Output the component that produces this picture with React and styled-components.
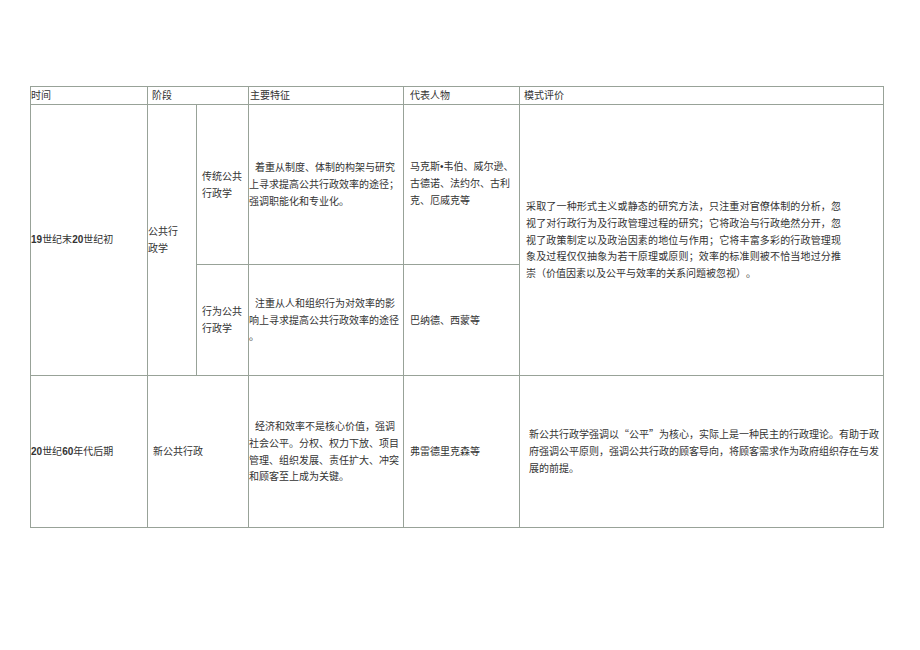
import styled, { createGlobalStyle } from 'styled-components'

const GlobalStyle = createGlobalStyle`
  body {
    margin: 0;
    background: #fff;
  }
`

const Page = styled.div`
  padding: 86px 0 0 30px;
  font-family: "Noto Sans CJK SC", "Liberation Sans", sans-serif;
  font-size: 10px;
  line-height: 16.7px;
  color: #333;
  text-spacing-trim: space-all;
`

// table lines are the 1px gaps showing the grid background through
const Table = styled.div`
  display: grid;
  grid-template-columns: 116px 48px 51px 154px 115px 363px;
  grid-template-rows: 17px 159px 110px 151px;
  gap: 1px;
  padding: 1px;
  width: max-content;
  background: #98a298;
`

const Cell = styled.div`
  display: flex;
  align-items: center;
  background: #fff;
  padding: ${({ $pad }) => $pad || '0'};
  grid-column: span ${({ $cols }) => $cols || 1};
  grid-row: span ${({ $rows }) => $rows || 1};
`

// $latin puts a western face first so marks like the name bullet stay narrow
const Text = styled.p`
  margin: 0;
  width: 100%;
  font-family: ${({ $latin }) =>
    $latin ? '"Liberation Sans", "Noto Sans CJK SC", sans-serif' : 'inherit'};
  text-indent: ${({ $indent }) => $indent || 0};
  text-align: ${({ $justify }) => ($justify ? 'justify' : 'left')};
  line-break: ${({ $loose }) => ($loose ? 'anywhere' : 'auto')};
`

const Num = styled.span`
  font-family: "Liberation Sans", Arial, sans-serif;
  font-weight: 700;
`

const App = () => {
  return (
    <Page lang="zh-CN">
      <GlobalStyle />
      <Table>
        <Cell>时间</Cell>
        <Cell $cols={2} $pad="0 0 0 4px">阶段</Cell>
        <Cell $pad="0 0 0 1px">主要特征</Cell>
        <Cell $pad="0 0 0 6px">代表人物</Cell>
        <Cell $pad="0 0 0 4px">模式评价</Cell>

        <Cell $rows={2}>
          <Text>
            <Num>19</Num>世纪末<Num>20</Num>世纪初
          </Text>
        </Cell>
        <Cell $rows={2} $pad="0 14px 0 0">
          <Text>公共行政学</Text>
        </Cell>
        <Cell $pad="0 0 0 5px">
          <Text>传统公共行政学</Text>
        </Cell>
        <Cell>
          <Text $indent="6px" $loose>
            着重从制度、体制的构架与研究上寻求提高公共行政效率的途径；强调职能化和专业化。
          </Text>
        </Cell>
        <Cell $pad="0 0 0 6px">
          <Text $latin>马克斯•韦伯、威尔逊、古德诺、法约尔、古利克、厄威克等</Text>
        </Cell>
        <Cell $rows={2} $pad="0 42px 0 6px">
          <Text $justify>
            采取了一种形式主义或静态的研究方法，只注重对官僚体制的分析，忽视了对行政行为及行政管理过程的研究；它将政治与行政绝然分开，忽视了政策制定以及政治因素的地位与作用；它将丰富多彩的行政管理现象及过程仅仅抽象为若干原理或原则；效率的标准则被不恰当地过分推崇（价值因素以及公平与效率的关系问题被忽视）。
          </Text>
        </Cell>

        <Cell $pad="0 0 0 5px">
          <Text>行为公共行政学</Text>
        </Cell>
        <Cell>
          <Text $indent="6px" $loose>
            注重从人和组织行为对效率的影响上寻求提高公共行政效率的途径。
          </Text>
        </Cell>
        <Cell $pad="0 0 0 6px">
          <Text>巴纳德、西蒙等</Text>
        </Cell>

        <Cell>
          <Text>
            <Num>20</Num>世纪<Num>60</Num>年代后期
          </Text>
        </Cell>
        <Cell $cols={2} $pad="0 0 0 5px">
          <Text>新公共行政</Text>
        </Cell>
        <Cell>
          <Text $indent="6px" $loose>
            经济和效率不是核心价值，强调社会公平。分权、权力下放、项目管理、组织发展、责任扩大、冲突和顾客至上成为关键。
          </Text>
        </Cell>
        <Cell $pad="0 0 0 6px">
          <Text>弗雷德里克森等</Text>
        </Cell>
        <Cell $pad="0 4px 0 9px">
          <Text $justify>
            新公共行政学强调以“公平”为核心，实际上是一种民主的行政理论。有助于政府强调公平原则，强调公共行政的顾客导向，将顾客需求作为政府组织存在与发展的前提。
          </Text>
        </Cell>
      </Table>
    </Page>
  )
}

export default App
